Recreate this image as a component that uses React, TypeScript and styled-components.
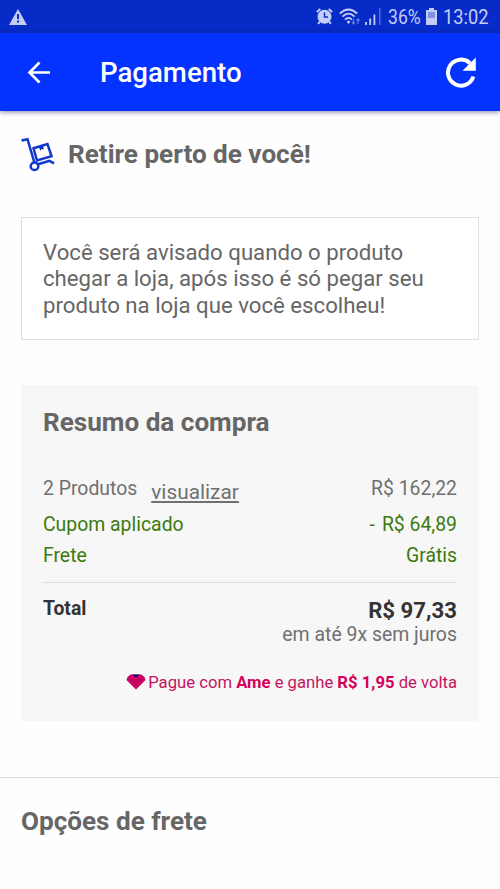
import React from "react";
import styled, { createGlobalStyle } from "styled-components";

const GlobalStyle = createGlobalStyle`
  * { box-sizing: border-box; }
  body { margin: 0; background: #fff; font-family: Roboto, sans-serif; color: #666; }
  h1, h2, p { margin: 0; }
`;

const Screen = styled.div`
  width: 500px;
  height: 889px;
  overflow: hidden;
  background: #fefefe;
`;

const StatusBar = styled.div`
  height: 33px;
  padding: 0 11px 0 9px;
  display: flex;
  align-items: center;
  justify-content: space-between;
  background: #072bc6;
  color: #c3cdf6;
`;

const StatusGroup = styled.div`
  display: flex;
  align-items: center;
`;

const StatusText = styled.span<{ $width: number; $scale: number }>`
  width: ${(p) => p.$width}px;
  font-size: 21px;
  line-height: 33px;
  white-space: nowrap;
  transform: scaleX(${(p) => p.$scale});
  transform-origin: left;
  padding-top: 2px;
`;

const Icon = styled.svg<{ $gap?: number }>`
  display: block;
  flex: none;
  margin-right: ${(p) => p.$gap ?? 0}px;
`;

const AppBar = styled.header`
  height: 78px;
  padding: 1px 23px 0 27px;
  display: flex;
  align-items: center;
  background: #0433ff;
  color: #fff;
  box-shadow: 0 1px 5px rgba(20, 30, 90, 0.55);
`;

const BarTitle = styled.h1`
  flex: 1;
  font-size: 27.6px;
  font-weight: 500;
  line-height: 32px;
  margin-left: 49px;
  padding-top: 1px;
`;

const IconButton = styled.button`
  padding: 0;
  border: 0;
  background: none;
  color: inherit;
`;

const Content = styled.main`
  padding: 0 21px;
`;

const PickupHeading = styled.div`
  display: flex;
  align-items: center;
  height: 106px;
  padding-bottom: 20px;
`;

const Heading = styled.h2`
  font-size: 26.1px;
  line-height: 30px;
  font-weight: 700;
  color: #666;
`;

const Notice = styled.p`
  height: 123px;
  padding: 21px;
  border: 1px solid #dedede;
  background: #fff;
  font-size: 22.2px;
  line-height: 26.4px;
  white-space: nowrap;
`;

const Summary = styled.section`
  margin-top: 45px;
  height: 336px;
  padding: 22px 22px 0;
  background: #f7f7f7;
`;

const Rows = styled.div`
  margin-top: 37px;
  padding-bottom: 11px;
  border-bottom: 1px solid #dcdcdc;
`;

const Row = styled.div<{ $height: number; $green?: boolean }>`
  display: flex;
  justify-content: space-between;
  height: ${(p) => p.$height}px;
  font-size: 19.4px;
  line-height: 30px;
  color: ${(p) => (p.$green ? "#3c7a0e" : "#707070")};
`;

const Products = styled.div`
  display: flex;
  gap: 14px;
`;

const ViewLink = styled.a`
  font-size: 20.85px;
  line-height: 30px;
  text-decoration: underline;
  text-underline-offset: 2px;
  text-decoration-thickness: 1.5px;
  padding-top: 3px;
`;

const Discount = styled.span`
  display: flex;
  gap: 7px;
`;

const TotalRow = styled.div`
  display: flex;
  justify-content: space-between;
  padding-top: 13px;
  color: #333;
  font-weight: 700;
  font-size: 19.4px;
  line-height: 25px;
`;

const TotalValue = styled.div`
  padding-top: 2px;
  text-align: right;
  font-size: 22.2px;
`;

const Installments = styled.div`
  font-size: 19.45px;
  line-height: 24px;
  font-weight: 400;
  color: #707070;
`;

const Cashback = styled.div`
  display: flex;
  align-items: center;
  justify-content: flex-end;
  margin-top: 24px;
  font-size: 16.67px;
  line-height: 24px;
  white-space: pre;
  color: #c4145f;
  b { color: #d6005a; }
`;

const Shipping = styled.section`
  margin-top: 56px;
  padding: 28px 21px;
  border-top: 1px solid #dedede;
`;

export default function App() {
  return (
    <Screen>
      <GlobalStyle />
      <StatusBar>
        <Icon width="18" height="16" viewBox="0 0 18 16">
          <path d="M9 0 18 16H0Z" fill="currentColor" />
          <path d="M8 5h2v5H8zM8 11.5h2v2H8z" fill="#072bc6" />
        </Icon>
        <StatusGroup>
          <Icon width="17" height="17" viewBox="0 0 17 17" $gap={6}>
            <circle cx="8.5" cy="8.8" r="7" fill="currentColor" />
            <path d="M.8 4 4.3 1M16.2 4 12.7 1M3.8 13.5 2.2 16M13.2 13.5l1.6 2.500" stroke="currentColor" strokeWidth="2" />
            <path d="M8.5 4.5V9H12" fill="none" stroke="#072bc6" strokeWidth="1.4" />
          </Icon>
          <Icon width="22" height="18" viewBox="0 0 22 18" $gap={4}>
            <g fill="none" stroke="currentColor" strokeWidth="1.8">
              <path d="M.8 5.5Q9.5-2.5 18.2 5.5" />
              <path d="M3.4 8.6Q9.5 2.6 15.6 8.6" />
              <path d="M6 11.6Q9.5 8 13 11.6" />
            </g>
            <circle cx="9.5" cy="14" r="1.5" fill="currentColor" />
            <path d="M14.5 11v5m-1.6-1.8 1.6 1.8 1.6-1.8M19 16v-5m-1.6 1.8L19 11l1.6 1.8" fill="none" stroke="#6078df" strokeWidth="1.2" />
          </Icon>
          <Icon width="16" height="17" viewBox="0 0 16 17" $gap={7}>
            <path d="M1 14v3M5.2 10.5V17M9.4 6.5V17" stroke="currentColor" strokeWidth="1.8" />
            <path d="M14.8 0v17" stroke="#5c74dc" strokeWidth="1.3" />
          </Icon>
          <StatusText $width={38} $scale={0.84}>36%</StatusText>
          <Icon width="11" height="17" viewBox="0 0 11 17" $gap={6}>
            <path d="M3 0h5v2h3v15H0V2h3z" fill="currentColor" />
            <path d="M2 4h7v6H2z" fill="#7f92e4" />
          </Icon>
          <StatusText $width={46} $scale={0.87}>13:02</StatusText>
        </StatusGroup>
      </StatusBar>
      <AppBar>
        <IconButton aria-label="Voltar">
          <Icon width="24" height="24" viewBox="0 0 24 24">
            <path d="M23 11.500H2.500M12.500 1.500l-10 10 10 10" fill="none" stroke="currentColor" strokeWidth="2.7" />
          </Icon>
        </IconButton>
        <BarTitle>Pagamento</BarTitle>
        <IconButton aria-label="Atualizar">
          <Icon width="32" height="32" viewBox="0 0 32 32">
            <path d="M28.400 19.500A13 13 0 1 1 25 6.200" fill="none" stroke="currentColor" strokeWidth="4" />
            <path d="M30.800.500v13.300H17.500z" fill="currentColor" />
          </Icon>
        </IconButton>
      </AppBar>
      <Content>
        <PickupHeading>
          <Icon width="34" height="36" viewBox="0 0 34 36" $gap={13}>
            <g fill="none" stroke="#1237cf" strokeWidth="2.500">
              <path d="M.500 4.500 6.500 3.200 13.500 27" />
              <circle cx="13.500" cy="30.300" r="3.800" />
              <path d="M17 28.300 28.500 24.800l4.500 2.500" />
              <path d="m12.500 12.300 14-4.200 4 12-14.500 4.400z" />
            </g>
            <path d="m17.500 10.800 4.400-1.300 1 3.900-1.900-.5-1.600 1.700z" fill="#1237cf" />
          </Icon>
          <Heading>Retire perto de você!</Heading>
        </PickupHeading>
        <Notice>
          Você será avisado quando o produto<br />
          chegar a loja, após isso é só pegar seu<br />
          produto na loja que você escolheu!
        </Notice>
        <Summary>
          <Heading>Resumo da compra</Heading>
          <Rows>
            <Row $height={36}>
              <Products>
                <span>2 Produtos</span>
                <ViewLink>visualizar</ViewLink>
              </Products>
              <span>R$ 162,22</span>
            </Row>
            <Row $height={31} $green>
              <span>Cupom aplicado</span>
              <Discount><span>-</span><span>R$ 64,89</span></Discount>
            </Row>
            <Row $height={30} $green>
              <span>Frete</span>
              <span>Grátis</span>
            </Row>
          </Rows>
          <TotalRow>
            <span>Total</span>
            <TotalValue>
              R$ 97,33
              <Installments>em até 9x sem juros</Installments>
            </TotalValue>
          </TotalRow>
          <Cashback>
            <Icon width="20" height="18" viewBox="0 0 20 18" $gap={2}>
              <path d="M4.500.500h11Q18.500 2 19.500 6L10 15.500.500 6Q1.500 2 4.500.500z" fill="#c80062" />
              <path d="M6.500.500h7l-2 2.500h-3z" fill="#240f78" />
            </Icon>
            <span>Pague com <b>Ame</b> e ganhe <b>R$ 1,95</b> de volta</span>
          </Cashback>
        </Summary>
      </Content>
      <Shipping>
        <Heading>Opções de frete</Heading>
      </Shipping>
    </Screen>
  );
}
